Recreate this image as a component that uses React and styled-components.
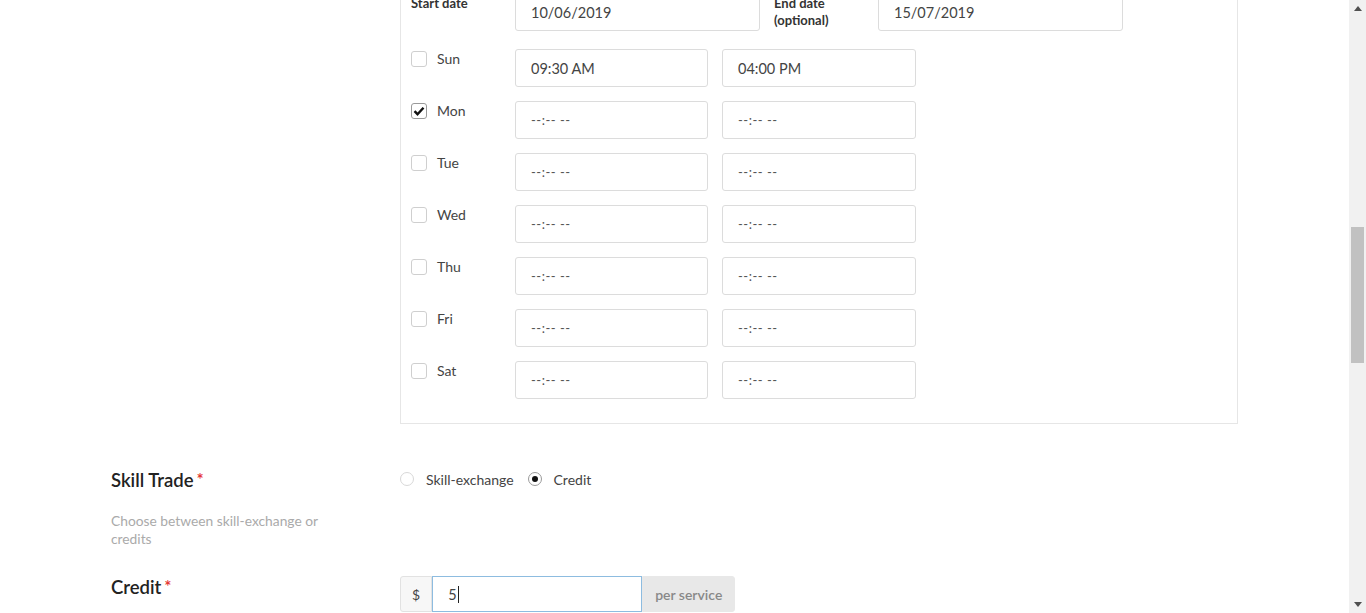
import React from "react";
import styled, { createGlobalStyle } from "styled-components";

const GlobalStyle = createGlobalStyle`
  html, body {
    margin: 0;
    padding: 0;
    height: 100%;
    overflow: hidden;
    background: #fff;
  }
  body {
    font-family: Lato, "Open Sans", "Liberation Sans", sans-serif;
    color: #333;
  }
  * {
    box-sizing: border-box;
  }
`;

const Screen = styled.div`
  display: flex;
  height: 613px;
  overflow: hidden;
`;

const Main = styled.div`
  flex: 1;
  overflow: hidden;
`;

const Page = styled.div`
  margin-top: -21px;
  padding-left: 111px;
  display: flex;
  flex-direction: column;
`;

const Section = styled.div`
  display: grid;
  grid-template-columns: 289px 838px;
  margin-top: ${({ $top }) => $top || 0}px;
`;

const Side = styled.div`
  display: flex;
  flex-direction: column;
`;

const Title = styled.div`
  font-size: 18.5px;
  line-height: 22px;
  font-weight: 600;
  color: #222;
  margin-top: ${({ $shift }) => $shift || 0}px;
`;

const Star = styled.span`
  color: #e53935;
  font-size: 17px;
  margin-left: 3px;
  vertical-align: top;
`;

const Help = styled.div`
  margin-top: 21px;
  width: 216px;
  font-size: 13.8px;
  line-height: 18px;
  color: #aaa;
`;

const Card = styled.div`
  border: 1px solid #e6e6e6;
  padding: 13px 10px 24px 10px;
  display: flex;
  flex-direction: column;
  gap: 14px;
`;

const Row = styled.div`
  display: flex;
  align-items: flex-start;
  gap: 14px;
  margin-bottom: ${({ $extra }) => $extra || 0}px;
`;

const FieldLabel = styled.div`
  width: 90px;
  font-size: 13px;
  line-height: 17px;
  font-weight: 700;
  color: #333;
  padding-top: 2px;
`;

const DayCell = styled.label`
  width: 90px;
  display: flex;
  align-items: flex-start;
  gap: 10px;
  font-size: 14px;
  line-height: 20px;
  color: #444;
`;

const Box = styled.span`
  width: 16px;
  height: 16px;
  margin-top: 2px;
  border: 1px solid ${({ $on }) => ($on ? "#9a9a9a" : "#cfcfcf")};
  border-radius: 3px;
  background: #fff;
  display: flex;
  align-items: center;
  justify-content: center;
`;

const Field = styled.div`
  width: ${({ $w }) => $w}px;
  height: 38px;
  border: 1px solid #dcdcdc;
  border-radius: 3px;
  padding: 0 15px;
  display: flex;
  align-items: center;
  font-size: ${({ $empty }) => ($empty ? 13 : 14.5)}px;
  color: ${({ $empty }) => ($empty ? "#555" : "#444")};
  letter-spacing: ${({ $empty }) => ($empty ? "0.5px" : "0")};
`;

const Radios = styled.div`
  display: flex;
  align-items: center;
  height: 20px;
  font-size: 14px;
  color: #444;
`;

const RadioItem = styled.label`
  display: flex;
  align-items: center;
  gap: 12px;
  margin-right: 14px;
`;

const Dot = styled.span`
  width: 14px;
  height: 14px;
  border-radius: 50%;
  border: 1px solid ${({ $on }) => ($on ? "#9a9a9a" : "#d8d8d8")};
  display: flex;
  align-items: center;
  justify-content: center;
  &::after {
    content: "";
    width: 6px;
    height: 6px;
    border-radius: 50%;
    background: ${({ $on }) => ($on ? "#111" : "transparent")};
  }
`;

const Group = styled.div`
  display: flex;
  height: 36px;
  font-size: 14px;
`;

const Addon = styled.div`
  display: flex;
  align-items: center;
  padding: 0 ${({ $dark }) => ($dark ? 12 : 11)}px;
  background: ${({ $dark }) => ($dark ? "#e8e8e8" : "#f7f7f7")};
  border: 1px solid ${({ $dark }) => ($dark ? "#e8e8e8" : "#e2e2e2")};
  border-radius: ${({ $right }) => ($right ? "0 3px 3px 0" : "3px 0 0 3px")};
  color: ${({ $dark }) => ($dark ? "#888" : "#444")};
  font-weight: ${({ $dark }) => ($dark ? 600 : 400)};
`;

const Input = styled.div`
  width: 210px;
  border: 1px solid #8dbce0;
  display: flex;
  align-items: center;
  padding: 0 15px;
  color: #444;
  font-size: 14.5px;
`;

const Caret = styled.span`
  width: 1px;
  height: 17px;
  background: #222;
  margin-left: 1px;
`;

const Scrollbar = styled.div`
  width: 17px;
  background: #f1f1f1;
  display: flex;
  flex-direction: column;
  align-items: center;
`;

const Arrow = styled.div`
  height: 17px;
  display: flex;
  align-items: center;
  justify-content: center;
`;

const Track = styled.div`
  flex: 1;
  width: 100%;
  padding: 0 2px;
`;

const Thumb = styled.div`
  background: #c1c1c1;
  height: 136px;
`;

const days = [
  { d: "Sun", from: "09:30 AM", to: "04:00 PM" },
  { d: "Mon", on: true },
  { d: "Tue" },
  { d: "Wed" },
  { d: "Thu" },
  { d: "Fri" },
  { d: "Sat" },
];

function Check({ on }) {
  return (
    <Box $on={on}>
      {on && (
        <svg width="12" height="10" viewBox="0 0 12 10">
          <path d="M1.5 5.2 L4.5 8.2 L10.5 1.8" fill="none" stroke="#111" strokeWidth="2.4" />
        </svg>
      )}
    </Box>
  );
}

export default function App() {
  return (
    <Screen>
      <GlobalStyle />
      <Main>
        <Page>
          <Section>
            <Side>
              <Title $shift={-3}>Availability</Title>
            </Side>
            <Card>
              <Row $extra={4}>
                <FieldLabel>Start date</FieldLabel>
                <Field $w={245}>10/06/2019</Field>
                <FieldLabel>
                  End date
                  <br />
                  (optional)
                </FieldLabel>
                <Field $w={245}>15/07/2019</Field>
              </Row>
              {days.map((day) => (
                <Row key={day.d}>
                  <DayCell>
                    <Check on={day.on} />
                    {day.d}
                  </DayCell>
                  <Field $w={193} $empty={!day.from}>
                    {day.from || "--:-- --"}
                  </Field>
                  <Field $w={194} $empty={!day.to}>
                    {day.to || "--:-- --"}
                  </Field>
                </Row>
              ))}
            </Card>
          </Section>

          <Section $top={45}>
            <Side>
              <Title>
                Skill Trade<Star>*</Star>
              </Title>
              <Help>Choose between skill-exchange or credits</Help>
            </Side>
            <Radios>
              <RadioItem>
                <Dot />
                Skill-exchange
              </RadioItem>
              <RadioItem>
                <Dot $on />
                Credit
              </RadioItem>
            </Radios>
          </Section>

          <Section $top={28}>
            <Side>
              <Title>
                Credit<Star>*</Star>
              </Title>
            </Side>
            <Group>
              <Addon>$</Addon>
              <Input>
                5<Caret />
              </Input>
              <Addon $dark $right>
                per service
              </Addon>
            </Group>
          </Section>
        </Page>
      </Main>
      <Scrollbar>
        <Arrow>
          <svg width="8" height="5" viewBox="0 0 8 5">
            <path d="M0 5 L4 0 L8 5 Z" fill="#505050" />
          </svg>
        </Arrow>
        <Track>
          <Thumb style={{ marginTop: 210 }} />
        </Track>
        <Arrow>
          <svg width="8" height="5" viewBox="0 0 8 5">
            <path d="M0 0 L4 5 L8 0 Z" fill="#505050" />
          </svg>
        </Arrow>
      </Scrollbar>
    </Screen>
  );
}
